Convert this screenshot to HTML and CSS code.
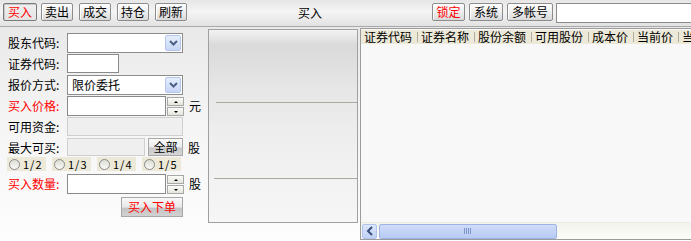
FILE: index.html
```html
<!DOCTYPE html>
<html>
<head>
<meta charset="utf-8">
<link rel="stylesheet" href="styles.css">
</head>
<body>
<div class="toolbar">
  <div class="tb-left">
    <div class="btn red pressed">买入</div>
    <div class="btn">卖出</div>
    <div class="btn">成交</div>
    <div class="btn">持仓</div>
    <div class="btn">刷新</div>
  </div>
  <div class="tb-title">买入</div>
  <div class="tb-right">
    <div class="btn red w33">锁定</div>
    <div class="btn w34">系统</div>
    <div class="btn w46">多帐号</div>
    <div class="acct"></div>
  </div>
</div>
<div class="main">
  <div class="form">
    <div class="row">
      <span class="lbl">股东代码:</span>
      <div class="select"><span class="sel-text"></span><span class="drop"><svg width="9" height="6" viewBox="0 0 9 6"><path d="M1 1 L4.5 4.5 L8 1" fill="none" stroke="#4d6185" stroke-width="2"/></svg></span></div>
    </div>
    <div class="row">
      <span class="lbl">证券代码:</span>
      <div class="input code"></div>
    </div>
    <div class="row">
      <span class="lbl">报价方式:</span>
      <div class="select"><span class="sel-text">限价委托</span><span class="drop"><svg width="9" height="6" viewBox="0 0 9 6"><path d="M1 1 L4.5 4.5 L8 1" fill="none" stroke="#4d6185" stroke-width="2"/></svg></span></div>
    </div>
    <div class="row">
      <span class="lbl red">买入价格:</span>
      <div class="input num"></div>
      <div class="spin"><span class="up"><i class="tri-up"></i></span><span class="down"><i class="tri-down"></i></span></div>
      <span class="unit">元</span>
    </div>
    <div class="row">
      <span class="lbl">可用资金:</span>
      <div class="input dis wide"></div>
    </div>
    <div class="row r6">
      <span class="lbl">最大可买:</span>
      <div class="input dis max"></div>
      <div class="allbtn">全部</div>
      <span class="unit">股</span>
    </div>
    <div class="radios">
      <label class="radio"><i class="dot"></i>1/2</label>
      <label class="radio"><i class="dot"></i>1/3</label>
      <label class="radio"><i class="dot"></i>1/4</label>
      <label class="radio"><i class="dot"></i>1/5</label>
    </div>
    <div class="row r8">
      <span class="lbl red">买入数量:</span>
      <div class="input num"></div>
      <div class="spin"><span class="up"><i class="tri-up"></i></span><span class="down"><i class="tri-down"></i></span></div>
      <span class="unit">股</span>
    </div>
    <div class="submit-row">
      <div class="submit">买入下单</div>
    </div>
  </div>
  <div class="mid">
    <div class="sec s1"></div>
    <div class="sec s2"></div>
    <div class="sec s3"></div>
  </div>
  <div class="grid">
    <div class="ghead">
      <span class="col">证券代码</span><i class="sep"></i>
      <span class="col">证券名称</span><i class="sep"></i>
      <span class="col">股份余额</span><i class="sep"></i>
      <span class="col">可用股份</span><i class="sep"></i>
      <span class="col">成本价</span><i class="sep"></i>
      <span class="col">当前价</span><i class="sep"></i>
      <span class="col">当前市值</span>
    </div>
    <div class="gbody"></div>
    <div class="hscroll">
      <div class="sarrow"><svg width="8" height="10" viewBox="0 0 8 10"><path d="M6 1 L2 5 L6 9" fill="none" stroke="#3a4f7a" stroke-width="2"/></svg></div>
      <div class="thumb"><span class="grip"></span></div>
    </div>
  </div>
</div>
</body>
</html>
```

FILE: styles.css
```css
* { box-sizing: border-box; margin: 0; padding: 0; }
html, body { width: 691px; height: 241px; overflow: hidden; }
body {
  font-family: "Noto Sans CJK SC", "Noto Sans", sans-serif;
  font-size: 12px;
  line-height: 1;
  color: #000;
  background: #f4f4f4;
}
.red { color: #ff0000; }

.toolbar {
  height: 27px;
  display: flex;
  align-items: flex-start;
  padding-top: 3px;
  border-bottom: 1px solid #a8a8a8;
  background: linear-gradient(#e6e6e6, #f4f4f4 45%, #e2e2e2);
}
.tb-left { display: flex; gap: 6px; padding-left: 3px; width: 190px; }
.tb-title { flex: 1; text-align: center; line-height: 20px; padding-right: 2px; }
.tb-right { display: flex; gap: 4px; width: 259px; }
.btn {
  width: 32px;
  height: 18px;
  display: flex;
  align-items: center;
  justify-content: center;
  border: 1px solid #8c8c8c;
  border-radius: 2px;
  background: linear-gradient(#fefefe, #ececec 55%, #d9d9d9);
  box-shadow: inset 1px 1px 0 #fff;
}
.btn.pressed { width: 34px; border-color: #7a7a7a; box-shadow: inset 1px 1px 0 #c8c8c8; background: linear-gradient(#f0f0f0, #e4e4e4); margin-right: -2px; }
.w33 { width: 33px; }
.w34 { width: 34px; }
.w46 { width: 46px; }
.acct {
  margin-left: -1px;
  flex: 1;
  height: 20px;
  border: 1px solid #8c8c8c;
  border-right: none;
  background: #fff;
}

.main { display: flex; height: 214px; background: linear-gradient(#e9e9e9, #f4f4f4 40%, #fdfdfd); }

.form { width: 208px; padding: 6px 0 0 8px; }
.row { display: flex; align-items: flex-start; height: 21px; }
.lbl { width: 59px; line-height: 20px; white-space: nowrap; }
.select {
  width: 116px;
  height: 20px;
  display: flex;
  align-items: center;
  border: 1px solid #8c8c8c;
  background: #fff;
  padding: 1px;
}
.sel-text { flex: 1; padding-left: 3px; line-height: 16px; }
.drop {
  width: 16px;
  height: 16px;
  display: flex;
  align-items: center;
  justify-content: center;
  border: 1px solid #b4c6ee;
  border-radius: 2px;
  background: linear-gradient(#e6eefc, #c6d6f6);
}
.input { height: 20px; border: 1px solid #8a8a8a; background: #fff; }
.code { width: 52px; height: 19px; }
.num { width: 99px; }
.dis { background: #efefef; border-color: #cfcfcf; }
.wide { width: 116px; height: 19px; }
.max { width: 78px; height: 18px; }
.r6 { height: 19px; }
.allbtn {
  width: 35px;
  height: 18px;
  margin-left: 3px;
  display: flex;
  align-items: center;
  justify-content: center;
  border: 1px solid #a8a8a8;
  background: linear-gradient(#fafafa, #ececec 50%, #c9c9c9 55%, #d4d4d4);
}
.spin { width: 17px; height: 19px; margin-left: 1px; margin-top: 1px; display: flex; flex-direction: column; gap: 1px; }
.spin span {
  flex: 1;
  display: flex;
  align-items: center;
  justify-content: center;
  border: 1px solid #a8a8a8;
  background: linear-gradient(#fbfbf8, #e6e5dc);
}
.tri-up { width: 0; height: 0; border-left: 2px solid transparent; border-right: 2px solid transparent; border-bottom: 2px solid #000; }
.tri-down { width: 0; height: 0; border-left: 2px solid transparent; border-right: 2px solid transparent; border-top: 2px solid #000; }
.unit { margin-left: 5px; line-height: 20px; }

.radios { display: flex; gap: 6px; height: 15px; margin-left: -1px; }
.radio {
  width: 39px;
  height: 14px;
  display: flex;
  align-items: center;
  gap: 3px;
  padding-left: 2px;
  background: #ece9d8;
  font-size: 11px;
  letter-spacing: 1px;
}
.dot {
  width: 11px;
  height: 11px;
  border: 1px solid #8a8a8a;
  border-radius: 50%;
  background: linear-gradient(#dcdcd4, #fafaf8);
}
.r8 { margin-top: 2px; }
.submit-row { display: flex; justify-content: flex-end; width: 175px; margin-top: 2px; }
.submit {
  width: 62px;
  height: 20px;
  display: flex;
  align-items: center;
  justify-content: center;
  color: #ff0000;
  border: 1px solid #a8a8a8;
  background: linear-gradient(#f8f8f8, #e8e8e8 50%, #c4c4c4 58%, #d2d2d2);
}

.mid {
  width: 150px;
  height: 194px;
  margin-top: 2px;
  border: 1px solid #a0a0a0;
  display: flex;
  flex-direction: column;
  background: linear-gradient(#f2f2f2 0, #dadada 8%, #e6e6e6 30%, #eeeeee 55%, #f6f6f6 100%);
}
.s1 { height: 73px; }
.s2 { height: 76px; }
.s1, .s2 { position: relative; }
.s1::after, .s2::after { content: ""; position: absolute; right: 0; bottom: 0; height: 1px; background: #a9a99d; }
.s1::after { left: 7px; }
.s2::after { left: 5px; }
.s3 { flex: 1; }

.grid {
  flex: 1;
  height: 212px;
  margin-top: 1px;
  margin-left: 2px;
  border: 1px solid #9c9c9c;
  border-right: none;
  display: flex;
  flex-direction: column;
  background: #f8f8f8;
  overflow: hidden;
}
.ghead {
  height: 14px;
  display: flex;
  align-items: center;
  background: #ece9d8;
  padding-left: 3px;
  white-space: nowrap;
  margin-top: 1px;
}
.col { flex: none; }
.sep { width: 1px; height: 10px; background: #b0ad9e; margin: 0 3px 0 5px; flex: none; }
.gbody { flex: 1; }
.hscroll {
  height: 17px;
  display: flex;
  align-items: center;
  padding-left: 1px;
  gap: 2px;
  background: linear-gradient(#f4f4ee, #fbfbf8);
  border-top: 1px solid #ebebe4;
}
.sarrow {
  width: 15px;
  height: 15px;
  display: flex;
  align-items: center;
  justify-content: center;
  border: 1px solid #b2c4ec;
  border-radius: 2px;
  background: linear-gradient(#dce6fb, #c0d1f5);
}
.thumb {
  width: 178px;
  height: 15px;
  display: flex;
  align-items: center;
  justify-content: center;
  border: 1px solid #9fb4e4;
  border-radius: 2px;
  background: linear-gradient(#cfdcfa, #b8cbf4);
}
.grip {
  width: 8px;
  height: 6px;
  background: repeating-linear-gradient(90deg, #7f96c8 0 1px, transparent 1px 2px);
}
```
